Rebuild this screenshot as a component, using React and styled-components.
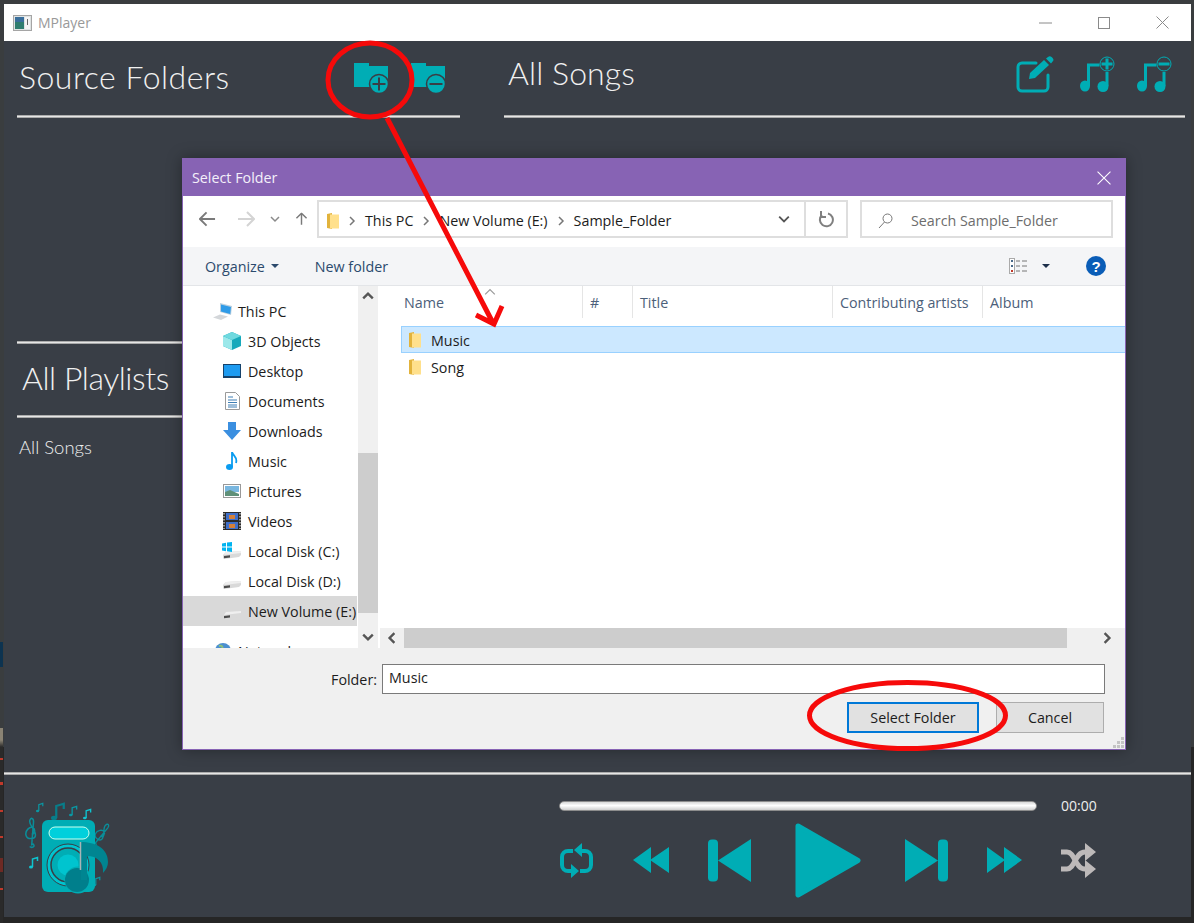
import React from "react";
import styled, { createGlobalStyle } from "styled-components";

const TEAL = "#00adb5";
const UI_FONT = `"Open Sans", "Noto Sans", sans-serif`;
const TITLE_FONT = `Lato, "Open Sans", sans-serif`;

const GlobalStyle = createGlobalStyle`
  html, body {
    margin: 0;
    padding: 0;
    background: #232323;
  }
  * { box-sizing: border-box; }
`;

const Page = styled.div`
  position: relative;
  width: 1194px;
  height: 923px;
  padding: 4px 3px 6px 4px;
  background:
    linear-gradient(
        #3a3d3f 642px,
        #0d3350 642px 667px,
        #3a3d3f 667px 728px,
        #8a8374 728px 740px,
        #2a2a2a 747px 758px,
        #c0392b 758px 760px,
        #2a2a2a 760px 782px,
        #c0392b 782px 785px,
        #2a2a2a 785px 810px,
        #c0392b 810px 812px,
        #2a2a2a 812px 836px,
        #c0392b 836px 838px,
        #2a2a2a 838px 858px,
        #6e2a24 858px 872px,
        #2a2a2a 872px 888px,
        #c0392b 888px 890px,
        #2a2a2a 890px
      )
      left top / 3px 100% no-repeat,
    linear-gradient(#3a3d3f 747px, #262626 747px);
  overflow: hidden;
`;

const AppWindow = styled.div`
  display: flex;
  flex-direction: column;
  height: 100%;
  background: #393e46;
`;

const TitleBar = styled.div`
  display: flex;
  align-items: center;
  flex: 0 0 37px;
  padding-left: 9px;
  background: #fff;
  color: #999;
  font: 14px ${UI_FONT};
`;

const AppName = styled.span`
  margin-left: 6px;
`;

const WinButtons = styled.div`
  display: flex;
  align-items: center;
  margin-left: auto;
  padding-right: 22px;
  gap: 46px;
`;

const Main = styled.div`
  display: flex;
  flex: 1;
  min-height: 0;
`;

const LeftColumn = styled.div`
  width: 443px;
  margin-left: 13px;
`;

const RightColumn = styled.div`
  width: 681px;
  margin-left: 44px;
`;

const PanelHeader = styled.div`
  display: flex;
  align-items: center;
  height: ${(p) => p.$height || 74}px;
  padding: ${(p) => p.$pad || "0 15px 0 2px"};
`;

const PanelTitle = styled.h1`
  margin: 0 0 ${(p) => p.$lift || 4}px;
  color: #f0f0f0;
  font: 300 32px ${TITLE_FONT};
  letter-spacing: ${(p) => p.$spacing}px;
  white-space: nowrap;
`;

const Rule = styled.div`
  height: 3px;
  margin-top: ${(p) => p.$top || 0}px;
  background: linear-gradient(#8f8f8f, #e6e6e6 50%, #8a8a8a);
`;

const IconGroup = styled.div`
  display: flex;
  align-items: center;
  gap: ${(p) => p.$gap}px;
  margin-left: auto;
`;

const EditWrap = styled.div`
  display: flex;
  margin-right: 4px;
`;

const PlaylistItem = styled.div`
  padding: 18px 0 0 2px;
  color: #eee;
  font: 300 18.500px ${TITLE_FONT};
`;

const PlayerBar = styled.div`
  flex: 0 0 145px;
`;

const PlayerRow = styled.div`
  display: flex;
`;

const LogoWrap = styled.div`
  flex: 0 0 555px;
  padding: 25px 0 0 21px;
`;

const PlayerControls = styled.div`
  display: flex;
  flex-direction: column;
  padding-top: 21px;
`;

const SeekRow = styled.div`
  display: flex;
  align-items: center;
  gap: 24px;
`;

const SeekBar = styled.div`
  width: 478px;
  height: 10px;
  border: 1px solid #8c8c8c;
  border-radius: 5px;
  background: linear-gradient(#d8d8d8, #fff 45%, #cfcfcf);
`;

const TimeText = styled.span`
  color: #eee;
  font: 14px ${UI_FONT};
`;

const Transport = styled.div`
  display: flex;
  align-items: center;
  gap: 39px;
  height: 76px;
  margin-top: 7px;
`;

const PlayWrap = styled.div`
  display: flex;
  margin: 0 5px;
`;

/* file dialog */
const Dialog = styled.div`
  position: absolute;
  left: 182px;
  top: 158px;
  display: flex;
  flex-direction: column;
  width: 944px;
  height: 592px;
  border: 1px solid #8763b4;
  background: #fff;
  box-shadow: 0 0 14px rgba(0, 0, 0, 0.35);
  font: 14.300px ${UI_FONT};
  color: #1c1c1c;
`;

const DialogTitle = styled.div`
  display: flex;
  align-items: center;
  justify-content: space-between;
  flex: 0 0 37px;
  padding: 0 14px 0 9px;
  background: #8763b4;
  color: #f4f0fa;
`;

const NavRow = styled.div`
  display: flex;
  align-items: center;
  flex: 0 0 51px;
  padding: 0 12px 5px 16px;
`;

const NavIcons = styled.div`
  display: flex;
  align-items: center;
  flex: 0 0 118px;
`;

const NavSlot = styled.span`
  display: flex;
  justify-content: center;
  width: ${(p) => p.$w}px;
`;

const Field = styled.div`
  display: flex;
  align-items: center;
  height: 38px;
  border: 2px solid #dedede;
`;

const AddressBar = styled(Field)`
  width: 531px;
`;

const Crumbs = styled.div`
  display: flex;
  align-items: center;
  flex: 1;
  gap: 8px;
  padding: 3px 0 0 8px;
`;

const AddressEnd = styled.span`
  display: flex;
  align-items: center;
  justify-content: center;
  align-self: stretch;
  width: 42px;
  border-left: 2px solid #dedede;
`;

const SearchBox = styled(Field)`
  width: 253px;
  margin-left: 12px;
  padding: 3px 0 0 16px;
  gap: 18px;
  color: #6d6d6d;
`;

const CommandBar = styled.div`
  display: flex;
  align-items: center;
  flex: 0 0 39px;
  padding: 0 19px 0 22px;
  border-bottom: 1px solid #e3e5e8;
  background: #f4f5f7;
  color: #2b4a6d;
`;

const CommandItem = styled.span`
  display: flex;
  align-items: center;
  gap: 6px;
  margin-right: 36px;
`;

const CommandRight = styled.div`
  display: flex;
  align-items: center;
  margin-left: auto;
  gap: 14px;
`;

const HelpBadge = styled.span`
  display: flex;
  align-items: center;
  justify-content: center;
  width: 20px;
  height: 20px;
  margin-left: 22px;
  border-radius: 50%;
  background: #0a5db7;
  color: #fff;
  font: bold 15px "Liberation Sans", sans-serif;
`;

const Caret = styled.span`
  width: 0;
  height: 0;
  border-left: 4px solid transparent;
  border-right: 4px solid transparent;
  border-top: 4px solid ${(p) => p.$color || "#2b4a6d"};
`;

const Browser = styled.div`
  display: flex;
  flex: 1;
  min-height: 0;
`;

const Sidebar = styled.div`
  flex: 0 0 174px;
  padding-top: 10px;
  overflow: hidden;
`;

const NavItem = styled.div`
  display: flex;
  align-items: center;
  flex-shrink: 0;
  height: 30px;
  margin-top: ${(p) => p.$top || 0}px;
  padding-left: ${(p) => (p.$root ? 30 : 39)}px;
  gap: ${(p) => (p.$root ? 5 : 6)}px;
  background: ${(p) => (p.$selected ? "#d9d9d9" : "transparent")};
  white-space: nowrap;
`;

const NavIconBox = styled.span`
  display: flex;
  justify-content: center;
  width: 20px;
`;

const VScroll = styled.div`
  display: flex;
  flex-direction: column;
  flex: 0 0 20px;
  margin-left: 1px;
  background: #f0f0f0;
`;

const ScrollBtn = styled.div`
  display: flex;
  align-items: center;
  justify-content: center;
  flex: 0 0 ${(p) => p.$size}px;
  padding-top: ${(p) => p.$nudge || 0}px;
`;

const VThumb = styled.div`
  flex: 0 0 160px;
  margin-top: 147px;
  background: #cdcdcd;
`;

const FileArea = styled.div`
  display: flex;
  flex-direction: column;
  flex: 1;
  min-width: 0;
  margin-left: 2px;
`;

const Columns = styled.div`
  display: grid;
  grid-template-columns: 203px 50px 200px 150px 1fr;
  flex: 0 0 32px;
`;

const ColHead = styled.div`
  position: relative;
  display: flex;
  align-items: center;
  padding-left: ${(p) => p.$pad || 7}px;
  border-right: ${(p) => (p.$last ? "none" : "1px solid #e5e5e5")};
  color: #4c607a;
`;

const SortArrow = styled.span`
  position: absolute;
  left: 104px;
  top: 0;
  display: flex;
`;

const FileList = styled.div`
  flex: 1;
  padding: 8px 0 0 21px;
`;

const FileRow = styled.div`
  display: flex;
  align-items: center;
  height: 27px;
  padding: 1px 0 0 7px;
  gap: 10px;
  border: 1px solid ${(p) => (p.$selected ? "#99d1ff" : "transparent")};
  border-right: none;
  background: ${(p) => (p.$selected ? "#cce8ff" : "transparent")};
`;

const HScroll = styled.div`
  display: flex;
  flex: 0 0 20px;
  background: #f0f0f0;
`;

const HThumb = styled.div`
  flex: 0 0 663px;
  background: #cdcdcd;
`;

const HTrack = styled.div`
  flex: 1;
`;

const DialogFooter = styled.div`
  position: relative;
  flex: 0 0 101px;
  padding: 16px 20px 0 0;
  background: #f0f0f0;
`;

const FolderRow = styled.div`
  display: flex;
  align-items: center;
  justify-content: flex-end;
  gap: 5px;
`;

const FolderInput = styled.div`
  display: flex;
  align-items: center;
  width: 723px;
  height: 30px;
  padding: 0 0 3px 6px;
  border: 1px solid #7a7a7a;
  background: #fff;
`;

const ButtonRow = styled.div`
  display: flex;
  justify-content: flex-end;
  gap: 17px;
  margin: 8px 1px 0 0;
`;

const DlgButton = styled.div`
  display: flex;
  align-items: center;
  justify-content: center;
  width: ${(p) => p.$w}px;
  height: 31px;
  border: ${(p) => (p.$primary ? "2px solid #0078d7" : "1px solid #adadad")};
  background: #e1e1e1;
`;

const Grip = styled.svg`
  position: absolute;
  right: 1px;
  bottom: 1px;
`;

const Annotations = styled.svg`
  position: absolute;
  left: 0;
  top: 0;
  pointer-events: none;
`;

/* drawings */
const AppGlyph = () => (
  <svg width="19" height="16" viewBox="0 0 19 16">
    <rect x="0.5" y="0.5" width="18" height="15" fill="#dfe3e3" stroke="#a5a5a5" />
    <rect x="2" y="2" width="9" height="12" fill="#2f7d6f" />
    <rect x="2" y="2" width="9" height="5" fill="#3a6f9c" />
    <rect x="12" y="2" width="5" height="12" fill="#f5f5f5" />
    <rect x="14" y="4" width="1" height="6" fill="#666" />
  </svg>
);

const MinIcon = () => (
  <svg width="13" height="12" viewBox="0 0 13 12">
    <path d="M0 6h13" stroke="#8a8a8a" />
  </svg>
);
const MaxIcon = () => (
  <svg width="12" height="12" viewBox="0 0 12 12">
    <rect x="0.5" y="0.5" width="11" height="11" fill="none" stroke="#8a8a8a" />
  </svg>
);
const CloseIcon = ({ color = "#8a8a8a", size = 13 }) => (
  <svg width={size} height={size} viewBox="0 0 13 13">
    <path d="M0.5 0.5l12 12M12.5 0.5l-12 12" stroke={color} strokeWidth="1" fill="none" />
  </svg>
);

const FolderBadge = ({ minus }) => (
  <svg width="34" height="30" viewBox="0 0 34 30">
    <path d="M0 0h15v3h19v21H0z" fill={TEAL} />
    <circle cx="25" cy="21" r="9.500" fill={TEAL} stroke="#393e46" strokeWidth="1.500" />
    <path d={minus ? "M18.500 21h13" : "M18.500 21h13M25 14.500v13"} stroke="#393e46" strokeWidth="2" />
  </svg>
);

const EditIcon = () => (
  <svg width="38" height="37" viewBox="0 0 38 37">
    <path
      d="M20 7H6a4 4 0 0 0-4 4v20a4 4 0 0 0 4 4h22a4 4 0 0 0 4-4V19"
      fill="none"
      stroke={TEAL}
      strokeWidth="3"
      strokeLinecap="round"
    />
    <path d="M13 23l1-6L28 4l5 5-14 13z" fill={TEAL} />
    <path d="M30 2.500l2-1.500a2.600 2.600 0 0 1 3.600 0l1 1a2.600 2.600 0 0 1 0 3.600L35 7.500z" fill={TEAL} />
  </svg>
);

const NoteBadge = ({ minus }) => (
  <svg width="35" height="36" viewBox="0 0 35 36">
    <ellipse cx="5" cy="30" rx="5" ry="5.500" fill={TEAL} />
    <ellipse cx="23" cy="30.500" rx="5.500" ry="5.500" fill={TEAL} />
    <path d="M8.500 30V9h11" fill="none" stroke={TEAL} strokeWidth="3" />
    <path d="M27 30V16" stroke={TEAL} strokeWidth="3" />
    <circle cx="27" cy="8" r="7" fill="none" stroke={TEAL} strokeWidth="1" />
    <path d={minus ? "M21.500 8h11" : "M21.500 8h11M27 2.500v11"} stroke={TEAL} strokeWidth="3" />
  </svg>
);

const MiniNote = ({ x, y, s = 1, c = "#0a97a3" }) => (
  <g transform={`translate(${x} ${y}) scale(${s})`}>
    <ellipse cx="2" cy="10" rx="2" ry="1.500" fill={c} />
    <path d="M3.500 10V2l5-1.500V4" fill="none" stroke={c} strokeWidth="1.500" />
  </g>
);

const Clef = ({ x, y, s = 1, r = 0 }) => (
  <g transform={`translate(${x} ${y}) rotate(${r}) scale(${s})`}>
    <path
      d="M8 28c4 3-1 5-3 3M7 30L9 5c0-4-3-5-4-1-1 5 6 9 6 15 0 5-9 5-10 0-1-5 4-9 7-8 3 1 3 7-1 7"
      fill="none"
      stroke="#0a8d99"
      strokeWidth="1.600"
    />
  </g>
);

const Logo = () => (
  <svg width="93" height="94" viewBox="0 0 93 94">
    <Clef x={0} y={17} s={0.95} />
    <Clef x={79} y={20} s={0.85} r={35} />
    <MiniNote x={11} y={3} s={0.8} />
    <MiniNote x={26} y={3} s={1.5} c="#087d89" />
    <MiniNote x={44} y={6} s={0.9} />
    <MiniNote x={58} y={9} s={0.9} c="#0fc4d0" />
    <MiniNote x={4} y={57} s={1} c="#0fc4d0" />
    <MiniNote x={68} y={77} s={0.8} />
    <rect x="17" y="20" width="53" height="72" rx="6" fill="#00adb5" />
    <rect x="24" y="27" width="40" height="12" rx="6" fill="#00d0dc" stroke="#cfe" strokeWidth="1" />
    <circle cx="43" cy="65" r="21" fill="#00c4cf" stroke="#393e46" strokeWidth="1" />
    <circle cx="43" cy="65" r="17" fill="#00adb5" stroke="#393e46" strokeWidth="1.500" />
    <circle cx="43" cy="65" r="10.500" fill="#00c4cf" />
    <circle cx="53" cy="80" r="13.500" fill="#00adb5" />
    <circle cx="52" cy="80" r="12" fill="#007f8c" />
    <path d="M56 42c14 0 27 6 27 20 0 4-2 8-5 11 1-11-6-17-16-17v24h-6z" fill="#008591" />
    <path d="M55.500 70V42" stroke="#a9b4b6" strokeWidth="1.500" />
  </svg>
);

const RepeatIcon = () => (
  <svg width="35" height="35" viewBox="0 0 35 35">
    <g fill="none" stroke={TEAL} strokeWidth="4">
      <path d="M14 8H9a6 6 0 0 0-6 6v8a6 6 0 0 0 6 6h4" />
      <path d="M21 28h5a6 6 0 0 0 6-6v-8a6 6 0 0 0-6-6h-4" />
    </g>
    <path d="M23 0v14l-8-7zM12 21v14l8-7z" fill={TEAL} />
  </svg>
);

const RewindIcon = () => (
  <svg width="36" height="26" viewBox="0 0 36 26">
    <path d="M0 13L18 0v26zM17 13L36 0v26z" fill={TEAL} />
  </svg>
);

const ForwardIcon = () => (
  <svg width="35" height="26" viewBox="0 0 35 26">
    <path d="M35 13L17 0v26zM18 13L0 0v26z" fill={TEAL} />
  </svg>
);

const PrevIcon = () => (
  <svg width="43" height="43" viewBox="0 0 43 43">
    <rect x="0" y="0.500" width="10" height="42" rx="4" fill={TEAL} />
    <path d="M10 21.500L43 0v43z" fill={TEAL} />
  </svg>
);

const NextIcon = () => (
  <svg width="43" height="43" viewBox="0 0 43 43">
    <rect x="33" y="0.500" width="10" height="42" rx="4" fill={TEAL} />
    <path d="M33 21.500L0 0v43z" fill={TEAL} />
  </svg>
);

const PlayIcon = () => (
  <svg width="66" height="75" viewBox="0 0 66 75">
    <path
      d="M3 3L63 37.500 3 72z"
      fill={TEAL}
      stroke={TEAL}
      strokeWidth="5"
      strokeLinejoin="round"
    />
  </svg>
);

const ShuffleIcon = () => (
  <svg width="35" height="35" viewBox="0 0 35 35">
    <g fill="none" stroke="#bdb9b9" strokeWidth="5">
      <path d="M0 9h6c8 0 8 17 18 17h3" />
      <path d="M0 26h6c8 0 8-17 18-17h3" />
    </g>
    <path d="M24 0l11 9-11 9zM24 17l11 9-11 9z" fill="#bdb9b9" />
  </svg>
);

const Arrow = ({ dir, color }) => (
  <svg width="18" height="16" viewBox="0 0 18 16" style={dir === "up" ? { transform: "rotate(90deg)" } : dir === "right" ? { transform: "scaleX(-1)" } : undefined}>
    <path d="M1 8h16M8 1L1 8l7 7" fill="none" stroke={color} strokeWidth="2" />
  </svg>
);

const Chevron = ({ rot = 0, color = "#777", size = 10, w = 1.500 }) => (
  <svg width={size} height={size} viewBox="0 0 10 10" style={{ transform: `rotate(${rot}deg)` }}>
    <path d="M1 3l4 4 4-4" fill="none" stroke={color} strokeWidth={w} />
  </svg>
);

const FolderIcon = () => (
  <svg width="12" height="16" viewBox="0 0 12 16">
    <path d="M0 1l5-1v16l-5-1z" fill="#e2b33c" />
    <rect x="3" y="1.500" width="9" height="14" fill="#ffe08c" />
  </svg>
);

const RefreshIcon = () => (
  <svg width="16" height="17" viewBox="0 0 16 17">
    <path d="M4 4a6.500 6.500 0 1 0 6-1.500" fill="none" stroke="#808080" strokeWidth="2" />
    <path d="M3 0v6h5" fill="none" stroke="#808080" strokeWidth="2" />
  </svg>
);

const SearchIcon = () => (
  <svg width="15" height="16" viewBox="0 0 15 16">
    <circle cx="9.500" cy="5.500" r="4.500" fill="none" stroke="#777" />
    <path d="M6.500 9L1 15" stroke="#777" />
  </svg>
);

const ViewIcon = () => (
  <svg width="19" height="16" viewBox="0 0 19 16">
    <rect x="0.500" y="0.500" width="5" height="15" fill="#fff" stroke="#aaa" />
    <rect x="2" y="2" width="2" height="2" fill="#4a6a8a" />
    <rect x="2" y="7" width="2" height="2" fill="#4a6a8a" />
    <rect x="2" y="12" width="2" height="2" fill="#c0392b" />
    <path d="M7 3h4M13 3h5M7 8h4M13 8h5M7 13h4M13 13h5" stroke="#777" />
  </svg>
);

const PcGlyph = () => (
  <svg width="20" height="18" viewBox="0 0 20 18">
    <path d="M7 1l12 3-1 9-11-3z" fill="#bcd0de" />
    <path d="M8 2.500l10 2.500-.8 7-9.200-2.500z" fill="#2f9be8" />
    <path d="M0 15.500l7-3 8 2-7 3.500z" fill="#d4d7da" />
  </svg>
);
const CubeGlyph = () => (
  <svg width="18" height="18" viewBox="0 0 18 18">
    <path d="M9 0l9 4v10l-9 4-9-4V4z" fill="#17a9bb" />
    <path d="M0 4l9 4v10l-9-4z" fill="#9ce8ea" />
    <path d="M9 0l9 4-9 4-9-4z" fill="#6fd9df" />
  </svg>
);
const DesktopGlyph = () => (
  <svg width="18" height="14" viewBox="0 0 18 14">
    <rect width="18" height="14" fill="#16426b" />
    <rect x="1" y="1" width="16" height="11" fill="#1e9bf0" />
  </svg>
);
const DocGlyph = () => (
  <svg width="15" height="18" viewBox="0 0 15 18">
    <path d="M0.500 0.500h10l4 4v13h-14z" fill="#fff" stroke="#9a9a9a" />
    <path d="M3 5h5M3 8h9M3 10.500h9M3 13h9M3 15h9" stroke="#3f7fb5" />
  </svg>
);
const DownGlyph = () => (
  <svg width="18" height="18" viewBox="0 0 18 18">
    <path d="M5 0h8v8h5l-9 10L0 8h5z" fill="#3b8fe0" />
  </svg>
);
const MusicGlyph = () => (
  <svg width="12" height="18" viewBox="0 0 12 18">
    <ellipse cx="3.500" cy="15" rx="3.500" ry="3" fill="#0a9cf0" />
    <path d="M6 15V0c1 4 6 5 4 11" fill="none" stroke="#0a9cf0" strokeWidth="1.800" />
  </svg>
);
const PictureGlyph = () => (
  <svg width="18" height="14" viewBox="0 0 18 14">
    <rect x="0.500" y="0.500" width="17" height="13" fill="#fff" stroke="#999" />
    <rect x="2" y="2" width="14" height="6" fill="#79b7e0" />
    <path d="M2 12V8l5-2 9 4v2z" fill="#5f9078" />
  </svg>
);
const VideoGlyph = () => (
  <svg width="18" height="18" viewBox="0 0 18 18">
    <rect width="18" height="18" fill="#2a2a2a" />
    <path d="M1 1v16M17 1v16" stroke="#ddd" strokeWidth="1.200" strokeDasharray="1.500 1.500" />
    <rect x="3" y="1" width="12" height="7" fill="#3f6fc9" />
    <rect x="3" y="10" width="12" height="7" fill="#3f6fc9" />
    <rect x="6" y="3" width="6" height="4" fill="#d4803a" />
    <rect x="6" y="12" width="6" height="4" fill="#d4803a" />
  </svg>
);
const DiskGlyph = ({ win }) => (
  <svg width="20" height="18" viewBox="0 0 20 18">
    <path d="M1 13l3-3 15-1v4L17 15 2 17l-1-1z" fill="#d9d9d9" />
    <path d="M4 10l15-1v2L2 13z" fill="#efefef" />
    <path d="M2 14l6-.700v2.200L2 16.200z" fill="#4d4d4d" />
    {win && <path d="M0 1.500l4-.700V4.500H0zM5 .6L10 0v4.500H5zM0 5.500h4v3.700l-4-.600zM5 5.500h5V10L5 9.300z" fill="#00b4f0" />}
  </svg>
);
const GlobeGlyph = () => (
  <svg width="18" height="18" viewBox="0 0 18 18">
    <circle cx="9" cy="9" r="8" fill="#4b8fd0" />
    <path d="M5 4c3-1 4 1 3 3s-4 1-4 4" fill="none" stroke="#8cc07a" strokeWidth="2" />
  </svg>
);

const NAV_ITEMS = [
  { label: "This PC", icon: <PcGlyph />, root: true },
  { label: "3D Objects", icon: <CubeGlyph /> },
  { label: "Desktop", icon: <DesktopGlyph /> },
  { label: "Documents", icon: <DocGlyph /> },
  { label: "Downloads", icon: <DownGlyph /> },
  { label: "Music", icon: <MusicGlyph /> },
  { label: "Pictures", icon: <PictureGlyph /> },
  { label: "Videos", icon: <VideoGlyph /> },
  { label: "Local Disk (C:)", icon: <DiskGlyph win /> },
  { label: "Local Disk (D:)", icon: <DiskGlyph /> },
  { label: "New Volume (E:)", icon: <DiskGlyph />, selected: true },
  { label: "Network", icon: <GlobeGlyph />, root: true, top: 10 },
];

const COLUMNS = ["#", "Title", "Contributing artists", "Album"];
const CRUMBS = ["This PC", "New Volume (E:)", "Sample_Folder"];

const FileDialog = () => (
  <Dialog>
    <DialogTitle>
      Select Folder
      <CloseIcon color="#fff" size={14} />
    </DialogTitle>
    <NavRow>
      <NavIcons>
        <NavSlot $w={17}><Arrow color="#7a7a7a" /></NavSlot>
        <NavSlot $w={21} />
        <NavSlot $w={18}><Arrow dir="right" color="#d4d4d4" /></NavSlot>
        <NavSlot $w={40}><Chevron color="#8a8a8a" /></NavSlot>
        <NavSlot $w={13}><Arrow dir="up" color="#7a7a7a" /></NavSlot>
      </NavIcons>
      <AddressBar>
        <Crumbs>
          <FolderIcon />
          {CRUMBS.map((c) => (
            <React.Fragment key={c}>
              <Chevron rot={-90} />
              <span>{c}</span>
            </React.Fragment>
          ))}
        </Crumbs>
        <NavSlot $w={40}><Chevron color="#555" size={12} /></NavSlot>
        <AddressEnd><RefreshIcon /></AddressEnd>
      </AddressBar>
      <SearchBox>
        <SearchIcon />
        Search Sample_Folder
      </SearchBox>
    </NavRow>
    <CommandBar>
      <CommandItem>Organize <Caret /></CommandItem>
      <CommandItem>New folder</CommandItem>
      <CommandRight>
        <ViewIcon />
        <Caret $color="#1c2f4a" />
        <HelpBadge>?</HelpBadge>
      </CommandRight>
    </CommandBar>
    <Browser>
      <Sidebar>
        {NAV_ITEMS.map((item) => (
          <NavItem key={item.label} $root={item.root} $selected={item.selected} $top={item.top}>
            <NavIconBox>{item.icon}</NavIconBox>
            {item.label}
          </NavItem>
        ))}
      </Sidebar>
      <VScroll>
        <ScrollBtn $size={20}><Chevron rot={180} color="#555" size={12} w={2} /></ScrollBtn>
        <VThumb />
        <ScrollBtn $size={35} $nudge={13}><Chevron color="#555" size={12} w={2} /></ScrollBtn>
      </VScroll>
      <FileArea>
        <Columns>
          <ColHead $pad={24}>
            Name
            <SortArrow><Chevron rot={180} color="#9a9a9a" size={12} w={1} /></SortArrow>
          </ColHead>
          {COLUMNS.map((c, i) => (
            <ColHead key={c} $last={i === COLUMNS.length - 1}>{c}</ColHead>
          ))}
        </Columns>
        <FileList>
          <FileRow $selected><FolderIcon />Music</FileRow>
          <FileRow><FolderIcon />Song</FileRow>
        </FileList>
        <HScroll>
          <ScrollBtn $size={24}><Chevron rot={90} color="#555" size={12} w={2} /></ScrollBtn>
          <HThumb />
          <HTrack />
          <ScrollBtn $size={36}><Chevron rot={-90} color="#555" size={12} w={2} /></ScrollBtn>
        </HScroll>
      </FileArea>
    </Browser>
    <DialogFooter>
      <FolderRow>
        Folder:
        <FolderInput>Music</FolderInput>
      </FolderRow>
      <ButtonRow>
        <DlgButton $primary $w={132}>Select Folder</DlgButton>
        <DlgButton $w={108}>Cancel</DlgButton>
      </ButtonRow>
      <Grip width="11" height="11" viewBox="0 0 11 11">
        <path d="M8 0h3v3H8zM4 4h3v3H4zM8 4h3v3H8zM0 8h3v3H0zM4 8h3v3H4zM8 8h3v3H8z" fill="#c4c4c4" />
      </Grip>
    </DialogFooter>
  </Dialog>
);

const App = () => (
  <Page>
    <GlobalStyle />
    <AppWindow>
      <TitleBar>
        <AppGlyph />
        <AppName>MPlayer</AppName>
        <WinButtons>
          <MinIcon />
          <MaxIcon />
          <CloseIcon />
        </WinButtons>
      </TitleBar>
      <Main>
        <LeftColumn>
          <PanelHeader>
            <PanelTitle $spacing={0.5}>Source Folders</PanelTitle>
            <IconGroup $gap={23}>
              <FolderBadge />
              <FolderBadge minus />
            </IconGroup>
          </PanelHeader>
          <Rule />
          <Rule $top={223} />
          <PanelHeader $height={71} $pad="0 0 0 5px">
            <PanelTitle $spacing={-0.45} $lift={5}>All Playlists</PanelTitle>
          </PanelHeader>
          <Rule />
          <PlaylistItem>All Songs</PlaylistItem>
        </LeftColumn>
        <RightColumn>
          <PanelHeader $pad="0 13px 8px 4px">
            <PanelTitle $spacing={0.1}>All Songs</PanelTitle>
            <IconGroup $gap={22}>
              <EditWrap><EditIcon /></EditWrap>
              <NoteBadge />
              <NoteBadge minus />
            </IconGroup>
          </PanelHeader>
          <Rule />
        </RightColumn>
      </Main>
      <PlayerBar>
        <Rule />
        <PlayerRow>
          <LogoWrap><Logo /></LogoWrap>
          <PlayerControls>
            <SeekRow>
              <SeekBar />
              <TimeText>00:00</TimeText>
            </SeekRow>
            <Transport>
              <RepeatIcon />
              <RewindIcon />
              <PrevIcon />
              <PlayWrap><PlayIcon /></PlayWrap>
              <NextIcon />
              <ForwardIcon />
              <ShuffleIcon />
            </Transport>
          </PlayerControls>
        </PlayerRow>
      </PlayerBar>
    </AppWindow>
    <FileDialog />
    <Annotations width="1194" height="923" viewBox="0 0 1194 923">
      <g fill="none" stroke="#f60a0a" strokeWidth="5">
        <ellipse cx="370" cy="80" rx="42" ry="37" />
        <ellipse cx="907.500" cy="715.500" rx="98" ry="33" />
        <path d="M387 118L493 323M476 315l18 9 8-18" />
      </g>
    </Annotations>
  </Page>
);

export default App;
